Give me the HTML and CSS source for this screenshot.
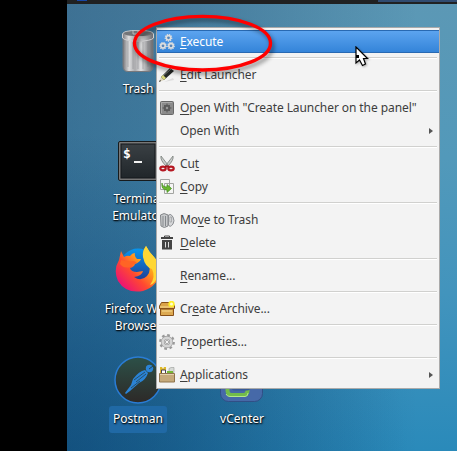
FILE: index.html
```html
<!DOCTYPE html>
<html lang="en">
<head>
<meta charset="utf-8">
<title>Desktop</title>
<link rel="stylesheet" href="styles.css">
</head>
<body>
<div class="screen">
<main class="desktop">
  <header class="panel"><span class="launcher"></span><span class="task"></span></header>

  <div class="shortcut trash">
    <svg width="48" height="48" viewBox="0 0 48 48">
      <defs><linearGradient id="can"><stop offset="0" stop-color="#77777b"/><stop offset=".2" stop-color="#dededf"/><stop offset=".4" stop-color="#aaaaad"/><stop offset=".6" stop-color="#e2e2e3"/><stop offset=".8" stop-color="#a0a0a3"/><stop offset="1" stop-color="#69696d"/></linearGradient></defs>
      <path d="M9 10V39Q9 44.500 14 44.500H34Q39 44.500 39 39V10Z" fill="url(#can)" stroke="#77787c"/>
      <path d="M14 14V40M19 15V42M24 15V42M29 15V42M34 14V40" stroke="#77787c" opacity=".4"/>
      <path d="M8.500 7Q9 3.500 24 3.500T39.500 7V11Q37 14 24 14T8.500 11Z" fill="url(#can)" stroke="#d0d0d2"/>
      <ellipse cx="24" cy="6.500" rx="14" ry="2.700" fill="#737578"/><path d="M19 4v3h5V4h5" fill="none" stroke="#b8b8ba"/>
    </svg>
    <span class="label">Trash</span>
  </div>

  <div class="shortcut terminal">
    <svg width="48" height="48" viewBox="0 0 48 48">
      <defs><linearGradient id="term" x2="0" y2="1"><stop stop-color="#3a4044"/><stop offset="1" stop-color="#20262a"/></linearGradient></defs>
      <rect x="4.500" y="4.500" width="39" height="39" rx="1.500" fill="#777" stroke="#171b1d"/>
      <rect x="7" y="7" width="34" height="34" fill="url(#term)" stroke="#15191c"/>
      <text x="9" y="21" class="prompt">$</text><path d="M20 25h8" stroke="#f2f2f2" stroke-width="2"/>
    </svg>
    <span class="label">Terminal<br>Emulator</span>
  </div>

  <div class="shortcut firefox">
    <svg width="48" height="48" viewBox="0 0 48 48">
      <defs>
        <linearGradient id="fox" x1=".8" y1=".1" x2=".1" y2=".8"><stop stop-color="#ffdf35"/><stop offset=".35" stop-color="#ff9b1c"/><stop offset=".65" stop-color="#ff4930"/><stop offset="1" stop-color="#ed176f"/></linearGradient>
        <linearGradient id="globe" x2="0" y2="1"><stop stop-color="#0796ee"/><stop offset="1" stop-color="#222f87"/></linearGradient>
      </defs>
      <circle cx="24" cy="22" r="18.500" fill="url(#globe)"/>
      <path d="M7 6L10 12Q13 10 16 11Q18 8 21 8Q20 11 23 14H27Q26 17 21 19Q20 22 16 23Q17 27 23 27L29 26Q28 31 20 32Q27 37 33 31Q37 27 35 20Q34 15 29 12Q29 6 32 1Q35 7 40 12Q46 18 46 25Q45 41 29 46Q12 49 4 36Q-1 25 5 15Z" fill="url(#fox)"/>
      <path d="M32 1Q35 7 40 12Q47 20 45 29Q41 39 36 40Q42 32 38 24Q31 22 29 12Q28 6 32 1" fill="#ffd735"/>
      <path d="M7 15Q13 17 20 16L23 18Q18 19 16 22Q10 24 6 19" fill="#ff6425"/>
    </svg>
    <span class="label">Firefox Web<br>Browser</span>
  </div>

  <div class="shortcut postman">
    <svg width="48" height="48" viewBox="0 0 48 48">
      <defs><linearGradient id="post" x2="0" y2="1"><stop stop-color="#2c5048"/><stop offset="1" stop-color="#2d2927"/></linearGradient></defs>
      <circle cx="24" cy="24" r="23" fill="url(#post)" stroke="#2a7cd4" stroke-width="1.500"/>
      <circle cx="35.500" cy="12.500" r="3.700" fill="#2a83d5"/><path d="M35 13l4-3" stroke="#27434c"/>
      <path d="M19 23Q25 15 31 14L34 17Q32 24 25 27L16 35L12 38L11 37L17 29Z" fill="#2a83d5"/>
      <path d="M20 24L31 16M22 26L32 18M17 32L26 25" stroke="#26434c" stroke-width=".8"/>
    </svg>
    <span class="label selected">Postman</span>
  </div>

  <div class="shortcut vcenter">
    <svg width="48" height="48" viewBox="0 0 48 48">
      <rect x="2.500" y="3.500" width="42" height="41" rx="8" fill="#4669a8" stroke="#304f86"/>
      <rect x="9.500" y="14" width="20" height="24" rx="4" fill="none" stroke="#72bc4b" stroke-width="4"/>
      <rect x="14" y="14" width="18" height="18" rx="3" fill="none" stroke="#355a98" stroke-width="3"/>
      <path d="M8 37Q9 39.500 12 39.500H27Q30 39.500 30 36" fill="none" stroke="#b3e989"/>
    </svg>
    <span class="label">vCenter</span>
  </div>

  <nav class="menu">
    <div class="item active">
      <svg class="icon" viewBox="0 0 16 16"><g fill="none" stroke="#dedede" stroke-width="1.600" stroke-dasharray="1.200 .9"><circle cx="9.500" cy="3.800" r="3.100"/><circle cx="4" cy="11.800" r="3.100"/><circle cx="12" cy="11.800" r="3.100"/></g><g fill="#5685b8" stroke="#dedede" stroke-width="1.600"><circle cx="9.500" cy="3.800" r="2.200"/><circle cx="4" cy="11.800" r="2.200"/><circle cx="12" cy="11.800" r="2.200"/></g></svg>
      <span><u>E</u>xecute</span></div>
    <hr>
    <div class="item">
      <svg class="icon" viewBox="0 0 16 16"><path d="M5 15L14 11L15 13Z" fill="#ddd"/><path d="M0 15L2 10L5 13Z" fill="#ddd5bd"/><path d="M0 15l1-2 1 1z" fill="#111"/><path d="M2 10L11 1L15 4L5 13Z" fill="#252927"/><path d="M4 9L12 2" stroke="#777b76"/><path d="M2 10l2-2 3 3-2 2z" fill="#d8d77a"/></svg>
      <span><u>E</u>dit Launcher</span></div>
    <hr>
    <div class="item">
      <svg class="icon" viewBox="0 0 16 16"><rect x="1.500" y="1.500" width="13" height="13" rx="1" fill="#8b8b8b" stroke="#686868"/><path d="M2.500 13V2.500H13" fill="none" stroke="#aaa"/><circle cx="8" cy="8" r="2.300" fill="none" stroke="#5b5b5b" stroke-width="2"/><path d="M8 3.500v9M3.500 8h9M5 5l6 6M5 11l6-6" stroke="#5b5b5b"/><circle cx="8" cy="8" r="1.200" fill="#999"/></svg>
      <span><u>O</u>pen With "Create Launcher on the panel"</span></div>
    <div class="item"><i class="icon"></i><span>Open With</span><b class="arrow"></b></div>
    <hr>
    <div class="item">
      <svg class="icon" viewBox="0 0 16 16"><path d="M2 0Q1 4 7 10L9 9ZM14 0Q15 4 9 10L7 9Z" fill="#c9cdcb" stroke="#777c79" stroke-width=".8"/><g fill="#eee" stroke="#b51822" stroke-width="2.200"><ellipse cx="4" cy="12.500" rx="2.700" ry="1.900"/><ellipse cx="12" cy="12.500" rx="2.700" ry="1.900"/></g><path d="M6 10.500h4" stroke="#a9131e" stroke-width="2"/></svg>
      <span>Cu<u>t</u></span></div>
    <div class="item">
      <svg class="icon" viewBox="0 0 16 16"><path d="M1.500.500h9v10h-9zM5.500 4.500h9v10h-9z" fill="#f5f5f4" stroke="#a2a4a1"/><path d="M3 4Q3 8 8 8V5.500l4.500 4L8 13.500V11Q2 11 3 4" fill="#6ab72f" stroke="#3f891c" stroke-width=".7"/></svg>
      <span><u>C</u>opy</span></div>
    <hr>
    <div class="item">
      <svg class="icon" viewBox="0 0 16 16"><path d="M1.500 3Q5 0 9 3V14Q5 17 2 14Z" fill="#c8cacc" stroke="#84878a"/><path d="M4 4v10M6.500 4v10" stroke="#84888c"/><path d="M9.500 3Q12 1 14 5T14 12Q11 16 9.500 13Z" fill="#d6d7d9" stroke="#8b8e92"/><path d="M11 5h1.500v5H11z" fill="#eee" stroke="#93969a" stroke-width=".7"/></svg>
      <span>Mo<u>v</u>e to Trash</span></div>
    <div class="item">
      <svg class="icon" viewBox="0 0 16 16"><path d="M5.500 2V1h5v1" fill="none" stroke="#444"/><path d="M2 2h12v2H2zM3 5h10v9.500H3z" fill="#444"/><path d="M6.500 7v5.500M9.500 7v5.500" stroke="#ddd"/></svg>
      <span><u>D</u>elete</span></div>
    <hr>
    <div class="item"><i class="icon"></i><span><u>R</u>ename...</span></div>
    <hr>
    <div class="item">
      <svg class="icon" viewBox="0 0 16 16"><path d="M2.500 1.500h11L15.500 5v2.500H.500V5z" fill="#dba348" stroke="#885018"/><path d="M1.500 8h13v6.500h-13z" fill="#dca951" stroke="#885018"/><path d="M1 6h14M3 10h10" stroke="#f9de96"/><circle cx="12.500" cy="3" r="3.200" fill="#ffee28"/><circle cx="12.500" cy="3" r="1.500" fill="#fffed0"/></svg>
      <span>Cr<u>e</u>ate Archive...</span></div>
    <hr>
    <div class="item">
      <svg class="icon" viewBox="0 0 16 16"><circle cx="8" cy="8" r="6.700" fill="none" stroke="#999" stroke-width="2.400" stroke-dasharray="2.630 2.630"/><circle cx="8" cy="8" r="4.300" fill="none" stroke="#999" stroke-width="3.700"/><circle cx="8" cy="8" r="4.300" fill="none" stroke="#d4d4d4" stroke-width="2.500"/><circle cx="8" cy="8" r="1.700" fill="#f3f3f3" stroke="#999" stroke-width=".8"/></svg>
      <span>P<u>r</u>operties...</span></div>
    <hr>
    <div class="item">
      <svg class="icon" viewBox="0 0 16 16"><path d="M1 0h2l1 2 1-2h2v7H1z" fill="#dfb929"/><path d="M10 6V1.500L12 .500h3v5z" fill="#d7dad7" stroke="#979b97" stroke-width=".6"/><path d="M2.500 3h4v4h-4z" fill="#fff" stroke="#4b4252"/><path d="M8 4h6v3H8z" fill="#76b736"/><path d="M.5 6.500h15v8.500H.500z" fill="#c6aa7b" stroke="#8f744c"/><path d="M1 7.500h14" stroke="#e3d1ad"/></svg>
      <span><u>A</u>pplications</span><b class="arrow"></b></div>
  </nav>
</main>

<svg class="highlight" width="150" height="70" viewBox="0 0 150 70"><ellipse cx="72.500" cy="33.200" rx="68" ry="26.800" fill="none" stroke="#f00" stroke-width="3.400"/></svg>
<svg class="pointer" width="14" height="22" viewBox="0 0 14 22"><path d="M1 1V17L4.500 14L7.500 19.500L10.500 18L8.500 12.500H12.500Z" fill="#fff" stroke="#000" stroke-width="1.200"/><path d="M1 9h3v3H1z" fill="#000"/></svg>
</div>
</body>
</html>
```

FILE: styles.css
```css
body { margin: 0; }
.screen {
  position: relative;
  display: flex;
  width: 457px;
  height: 451px;
  overflow: hidden;
  background: #000;
  font-family: "Noto Sans", sans-serif;
  font-size: 12px;
}
.desktop {
  position: relative;
  flex: 1;
  margin-left: 67px;
  background:
    radial-gradient(ellipse 340px 320px at 0 100%, rgba(5, 50, 95, .42), transparent),
    linear-gradient(90deg, rgba(5, 38, 82, .34), rgba(5, 38, 82, .28) 25%, transparent 90%),
    linear-gradient(180deg, #5c98b5 0%, #5299ba 35%, #4294bd 65%, #2a8aba 100%);
}
.panel {
  display: flex;
  justify-content: space-between;
  height: 4px;
  background: #202122;
}
.launcher { width: 10px; height: 1px; margin-left: 10px; background: #1746a6; }
.task { width: 79px; height: 2px; background: #304b70; }
.shortcut {
  position: absolute;
  display: flex;
  flex-direction: column;
  align-items: center;
  width: 104px;
}
.shortcut svg { display: block; }
.trash { left: 19px; top: 27px; }
.terminal { left: 19px; top: 137px; }
.firefox { left: 19px; top: 245px; }
.firefox .label { margin-top: 7px; }
.postman { left: 19px; top: 356px; }
.vcenter { left: 123px; top: 357px; }
.label {
  margin-top: 5px;
  color: #fff;
  line-height: 17px;
  text-align: center;
  text-shadow: 1px 1px 2px #000, 0 1px 1px rgba(0, 0, 0, .6);
}
.selected {
  box-sizing: border-box;
  width: 58px;
  margin-top: 2px;
  padding: 4px 0 6px;
  border-radius: 3px;
  background: #2069a5;
}
.prompt { fill: #fff; font: bold 13px "DejaVu Sans Mono", monospace; }
.menu {
  position: absolute;
  left: 89px;
  top: 27px;
  box-sizing: border-box;
  width: 284px;
  height: 362px;
  padding: 2px 0;
  border: 1px solid #aaa;
  background: #f3f3f3;
  color: #3d3d3d;
  letter-spacing: -.08px;
}
.item {
  display: flex;
  align-items: center;
  box-sizing: border-box;
  height: 23px;
  padding: 0 6px 0 2px;
  line-height: 23px;
  white-space: nowrap;
}
.active {
  border: 1px solid #2869b2;
  border-width: 1px 0;
  background: linear-gradient(#5ca4ef, #3484d9);
  color: #fff;
}
.icon { width: 16px; height: 16px; flex: none; margin-right: 5px; }
.item u { text-decoration-thickness: 1px; text-underline-offset: 2px; text-decoration-skip-ink: none; }
.arrow {
  margin-left: auto;
  border: solid transparent;
  border-width: 3px 0 3px 4px;
  border-left-color: #555;
}
.menu hr {
  height: 1px;
  margin: 4px 2px 4px;
  border: 0;
  border-bottom: 1px solid #fff;
  background: #d0d0ce;
}
.highlight {
  position: absolute;
  left: 130px;
  top: 10px;
  filter: drop-shadow(2px 3px 2px rgba(0, 0, 0, .45));
}
.pointer {
  position: absolute;
  left: 355px;
  top: 46px;
  filter: drop-shadow(1px 1px 1px rgba(0, 0, 0, .3));
}
```
